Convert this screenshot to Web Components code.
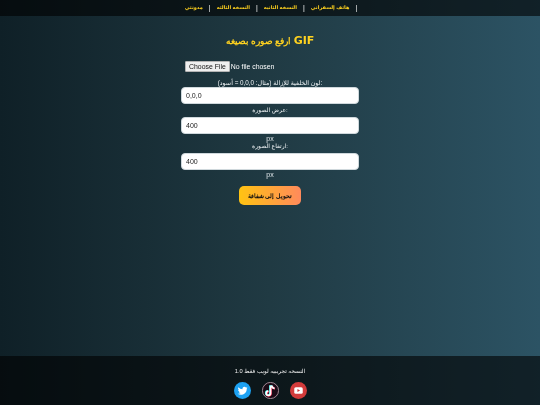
<!DOCTYPE html>
<html lang="ar">
<head>
<meta charset="utf-8">
<title>GIF</title>
<style>
  html, body { margin: 0; height: 100%; }
  body {
    display: flex;
    flex-direction: column;
    height: 405px;
    overflow: hidden;
    background: linear-gradient(90deg, #0f2027, #203a43, #2c5364);
    color: #fff;
    font-family: "Liberation Sans", "Noto Sans", "DejaVu Sans", sans-serif;
  }
</style>
</head>
<body>
<site-nav>
  <nav-link>مدونتي</nav-link>
  <nav-link>النسخه الثالثه</nav-link>
  <nav-link>النسخه الثانيه</nav-link>
  <nav-link>هاتف إلسفراني</nav-link>
</site-nav>
<gif-form></gif-form>
<site-footer>النسخه تجريبيه لويب فقط 1.0</site-footer>

<script>
customElements.define('nav-link', class extends HTMLElement {
  constructor() {
    super()
    const shadow = this.attachShadow({mode: 'open'})
    shadow.innerHTML = `
      <style>
        :host { display: block; color: #ffd21f; font-size: 5px; font-weight: bold; line-height: 15px; }
      </style>
      <slot></slot>
    `
  }
})

customElements.define('site-nav', class extends HTMLElement {
  constructor() {
    super()
    const shadow = this.attachShadow({mode: 'open'})
    shadow.innerHTML = `
      <style>
        :host {
          display: flex;
          justify-content: center;
          align-items: flex-start;
          gap: 6px;
          height: 16px;
          flex: none;
          padding-left: 2px;
          box-sizing: border-box;
          background: rgba(0, 0, 0, .6);
        }
        .sep { color: #fff; font-size: 7px; line-height: 15px; filter: blur(.2px); }
        slot { filter: blur(.2px); display: block; }
      </style>
    `
    // one slot per link, with a separator after each
    ;[...this.children].forEach((link, i) => {
      link.slot = 'l' + i
      const s = document.createElement('slot')
      s.name = 'l' + i
      shadow.append(s)
      const sep = document.createElement('span')
      sep.className = 'sep'
      sep.textContent = '|'
      shadow.append(sep)
    })
  }
})

customElements.define('form-label', class extends HTMLElement {
  constructor() {
    super()
    const shadow = this.attachShadow({mode: 'open'})
    shadow.innerHTML = `
      <style>
        :host { display: block; text-align: center; font-size: 6px; line-height: 7px; color: #eef2f4; white-space: nowrap; }
      </style>
      <slot></slot>
    `
  }
})

customElements.define('text-field', class extends HTMLElement {
  constructor() {
    super()
    const shadow = this.attachShadow({mode: 'open'})
    shadow.innerHTML = `
      <style>
        :host { display: block; }
        input {
          display: block;
          box-sizing: border-box;
          width: 178px;
          height: 17px;
          margin: 0;
          padding: 0 4px;
          border: 1px solid #cfd8dc;
          border-radius: 4px;
          background: #fff;
          color: #222;
          font: 7px "Liberation Sans", sans-serif;
        }
      </style>
      <input>
    `
    shadow.querySelector('input').value = this.getAttribute('value') || ''
  }
})

customElements.define('gif-form', class extends HTMLElement {
  constructor() {
    super()
    const shadow = this.attachShadow({mode: 'open'})
    shadow.innerHTML = `
      <style>
        :host {
          display: flex;
          flex-direction: column;
          align-items: center;
          flex: 1;
          padding-top: 18px;
          filter: blur(.2px);
        }
        h1 {
          margin: 0 0 13px;
          color: #ffd21f;
          font-size: 8.5px;
          line-height: 14px;
          font-weight: bold;
          font-family: "Liberation Sans", sans-serif;
        }
        h1 span { font: bold 11px "DejaVu Sans", sans-serif; }
        .file { width: 178px; margin-bottom: 4px; }
        input[type=file] {
          display: block;
          margin-left: 4px;
          width: 170px;
          height: 11px;
          color: #fff;
          font: 6.9px "Liberation Sans", sans-serif;
        }
        input[type=file]::file-selector-button {
          height: 11px;
          padding: 0 3px;
          margin-right: 1px;
          border: 1px solid #b4b4b4;
          border-radius: 1px;
          background: #efefef;
          color: #111;
          font: 6.9px "Liberation Sans", sans-serif;
        }
        form-label { margin: 3px 0; }
        form-label.first { margin-bottom: 1px; font-size: 6.3px; }
        form-label.tight { margin-top: 0; }
        .unit { font-size: 7px; line-height: 8px; margin-top: 1px; color: #dfe6e9; }
        button {
          margin-top: 7px;
          padding: 0 0 1px;
          width: 62px;
          height: 19px;
          border: 0;
          border-radius: 5px;
          background: linear-gradient(90deg, #ffc312, #ff8a5c);
          color: #111;
          white-space: nowrap;
          font: bold 6px "Liberation Sans", sans-serif;
        }
      </style>
      <h1>ارفع صوره بصيغه <span>GIF</span></h1>
      <div class="file"><input type="file"></div>
      <form-label class="first">لون الخلفية للإزالة (مثال: 0,0,0 = أسود):</form-label>
      <text-field value="0,0,0"></text-field>
      <form-label>عرض الصورة:</form-label>
      <text-field value="400"></text-field>
      <div class="unit">px</div>
      <form-label class="tight">ارتفاع الصورة:</form-label>
      <text-field value="400"></text-field>
      <div class="unit">px</div>
      <button>تحويل إلى شفافة</button>
    `
  }
})

customElements.define('site-footer', class extends HTMLElement {
  constructor() {
    super()
    const shadow = this.attachShadow({mode: 'open'})
    shadow.innerHTML = `
      <style>
        :host {
          display: flex;
          flex-direction: column;
          align-items: center;
          flex: none;
          box-sizing: border-box;
          height: 49px;
          padding-top: 11px;
          background: rgba(0, 0, 0, .6);
          color: #f2f2f2;
        }
        p { margin: 0; font-size: 5.7px; line-height: 9px; filter: blur(.2px); }
        .icons { display: flex; gap: 11px; margin-top: 6px; filter: blur(.2px); }
        svg { display: block; width: 17px; height: 17px; }
      </style>
      <p><slot></slot></p>
      <div class="icons">
        <svg viewBox="0 0 24 24"><circle cx="12" cy="12" r="12" fill="#1da1f2"/>
          <path fill="#fff" d="M19 8.100c-.5.200-1 .4-1.600.4.600-.3 1-.9 1.200-1.500-.5.300-1.100.6-1.800.7a2.800 2.800 0 0 0-4.800 2.600c-2.400-.1-4.400-1.200-5.800-2.900-.7 1.300-.4 2.900.9 3.800-.5 0-.9-.1-1.300-.4 0 1.400 1 2.500 2.300 2.800-.4.100-.8.100-1.300 0 .4 1.100 1.400 1.900 2.600 2-1.100.9-2.600 1.300-4.200 1.100 4.200 2.700 12.800 1.400 12.800-7.200 0-.1 0-.3 0-.4.5-.4 1-.9 1.300-1.400z"/></svg>
        <svg viewBox="0 0 24 24"><circle cx="12" cy="12" r="11.400" fill="#1a0b16" stroke="#c9a9b5" stroke-width="1.100"/>
          <path fill="none" stroke="#25f4ee" stroke-width="2.500" d="M11.300 4.500v11a3 3 0 1 1-3-3M13 4.500c.2 2.400 1.700 3.800 4 4"/>
          <path fill="none" stroke="#fe2c55" stroke-width="2.500" d="M12.700 5.500v11a3 3 0 1 1-3-3M14.400 5.500c.2 2.400 1.700 3.800 4 4"/>
          <path fill="none" stroke="#fff" stroke-width="2.500" d="M12 5v11a3 3 0 1 1-3-3M13.700 5c.2 2.400 1.700 3.800 4 4"/></svg>
        <svg viewBox="0 0 24 24"><circle cx="12" cy="12" r="12" fill="#d33b3b"/>
          <rect x="6" y="7.500" width="12" height="9" rx="2.200" fill="#fff"/>
          <path fill="#d33b3b" d="M10.500 9.800v4.400l3.700-2.200z"/></svg>
      </div>
    `
  }
})
</script>
</body>
</html>
